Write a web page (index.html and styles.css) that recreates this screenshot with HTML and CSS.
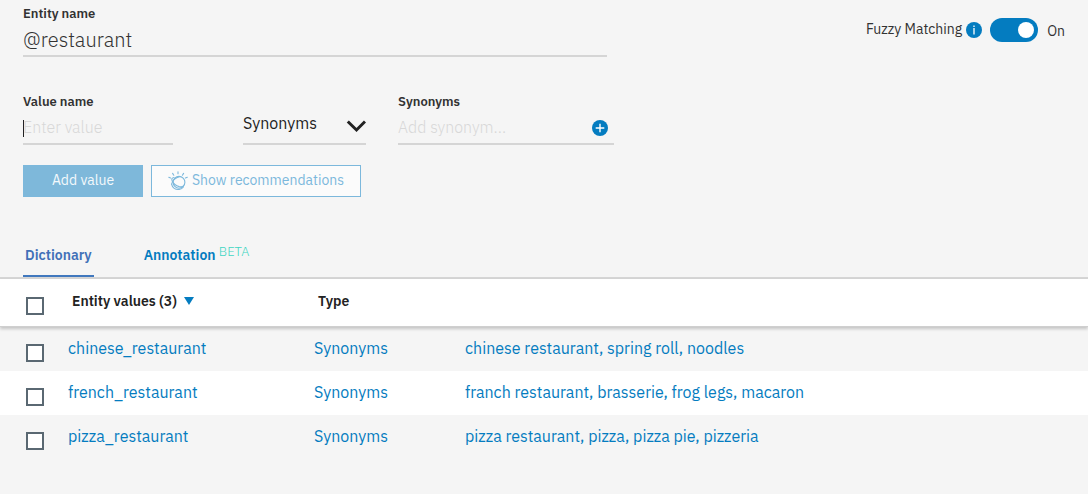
FILE: index.html
```html
<!DOCTYPE html>
<html lang="en">
<head>
<meta charset="utf-8">
<title>Entity @restaurant</title>
<link rel="stylesheet" href="styles.css">
</head>
<body>
<main class="page">
  <header class="entity-bar">
    <div class="field entity-field">
      <label class="label" for="entity">Entity name</label>
      <input class="entity-input" id="entity" type="text" value="@restaurant">
    </div>
    <div class="fuzzy">
      <label class="fuzzy-label" for="fuzzy">Fuzzy Matching</label>
      <button class="icon-button" type="button" aria-label="About fuzzy matching">
        <svg width="16" height="16" viewBox="0 0 16 16"><circle cx="8" cy="8" r="8" fill="#047cc0"/><path d="M8 6v6.500M8 3.500v1.500" stroke="#fff" stroke-width="1.300"/></svg>
      </button>
      <input class="toggle" id="fuzzy" type="checkbox" role="switch" checked>
      <span class="fuzzy-state">On</span>
    </div>
  </header>

  <form class="value-form">
    <div class="value-row">
      <div class="field value-field">
        <label class="label" for="value">Value name</label>
        <input class="text-input value-input" id="value" type="text" placeholder="Enter value">
      </div>
      <div class="field type-field">
        <select class="type-select" aria-label="Value type"><option>Synonyms</option><option>Patterns</option></select>
        <svg class="chevron" width="20" height="13" viewBox="0 0 20 13"><path d="M1.800 1.500 10.500 10l8.500-8.500" fill="none" stroke="#222" stroke-width="3"/></svg>
      </div>
      <div class="field synonym-field">
        <label class="label" for="synonym">Synonyms</label>
        <div class="synonym-box">
          <input class="synonym-input" id="synonym" type="text" placeholder="Add synonym...">
          <button class="icon-button" type="button" aria-label="Add synonym">
            <svg width="16" height="16" viewBox="0 0 16 16"><circle cx="8" cy="8" r="8" fill="#047cc0"/><path d="M8 3.700v8.600M3.700 8h8.600" stroke="#fff" stroke-width="1.400"/></svg>
          </button>
        </div>
      </div>
    </div>
    <div class="actions">
      <button class="button button-primary" type="button">Add value</button>
      <button class="button button-secondary" type="button">
        <svg width="20" height="20" viewBox="0 0 20 20" fill="none" stroke="#7cb8dc" stroke-width="1.100" stroke-linecap="round">
          <circle cx="11" cy="11.300" r="5.900"/>
          <path d="M6 6.500C4 6.600 3.300 8 4.200 10s3.600 4.700 7 5.600c2.200.5 3.700.2 4.400-.8"/>
          <path d="M3.600 13.200C4.200 9.900 7.500 6.800 12 5.500"/>
          <path d="M3.600 13.200c.6 3.500 3.700 5.800 7.600 5.300 1.900-.3 3.300-1.200 4.200-2.500"/>
          <path d="M.8 6.200 2.600 7M4.600 2.400l1.200 1.800M10 .8v2M15.600 2.400l-1.200 1.800M19.300 6.200l-1.900.8"/>
        </svg>
        <span>Show recommendations</span>
      </button>
    </div>
  </form>

  <nav class="tabs">
    <a class="tab tab-active" href="#dictionary">Dictionary</a>
    <a class="tab" href="#annotation">Annotation <span class="beta">BETA</span></a>
  </nav>

  <table class="values" id="dictionary">
    <thead>
      <tr>
        <th class="col-check"><input class="check" type="checkbox" aria-label="Select all"></th>
        <th class="col-name"><button class="sort" type="button">Entity values (3)<svg width="10" height="8" viewBox="0 0 10 8"><path d="M0 0h10L5 8z" fill="#047cc0"/></svg></button></th>
        <th class="col-type">Type</th>
        <th aria-label="Synonyms"></th>
      </tr>
    </thead>
    <tbody>
      <tr>
        <td><input class="check" type="checkbox" aria-label="chinese_restaurant"></td>
        <td><a class="link" href="#chinese">chinese_restaurant</a></td>
        <td><a class="link" href="#chinese">Synonyms</a></td>
        <td><a class="link" href="#chinese">chinese restaurant, spring roll, noodles</a></td>
      </tr>
      <tr>
        <td><input class="check" type="checkbox" aria-label="french_restaurant"></td>
        <td><a class="link" href="#french">french_restaurant</a></td>
        <td><a class="link" href="#french">Synonyms</a></td>
        <td><a class="link" href="#french">franch restaurant, brasserie, frog legs, macaron</a></td>
      </tr>
      <tr>
        <td><input class="check" type="checkbox" aria-label="pizza_restaurant"></td>
        <td><a class="link" href="#pizza">pizza_restaurant</a></td>
        <td><a class="link" href="#pizza">Synonyms</a></td>
        <td><a class="link" href="#pizza">pizza restaurant, pizza, pizza pie, pizzeria</a></td>
      </tr>
    </tbody>
  </table>
</main>
</body>
</html>
```

FILE: styles.css
```css
* {
  box-sizing: border-box;
}

body {
  margin: 0;
  background: #f5f5f5;
  color: #323232;
  font: 14px/20px "IBM Plex Sans", Roboto, sans-serif;
}

input,
select,
button {
  margin: 0;
  padding: 0;
  border: 0;
  border-radius: 0;
  background: none;
  color: inherit;
  font: inherit;
  outline: none;
}

svg {
  display: block;
  flex: none;
}

/* Entity header */
.entity-bar {
  display: flex;
  justify-content: space-between;
  gap: 24px;
  padding: 4px 23px 0;
}

.field {
  display: flex;
  flex-direction: column;
}

.label {
  font-size: 13px;
  font-weight: 600;
}

.entity-field {
  flex: 0 1 584px;
}

.entity-input {
  width: 100%;
  height: 33px;
  border-bottom: 2px solid #d5d5d5;
  font-size: 20px;
  font-weight: 300;
}

.fuzzy {
  display: flex;
  align-items: center;
  align-self: flex-start;
  padding-top: 14px;
}

.fuzzy-label {
  padding: 0 4px 2px 0;
}

.icon-button {
  flex: none;
}

.toggle {
  appearance: none;
  display: flex;
  width: 48px;
  height: 24px;
  margin: 0 9px 0 8px;
  padding: 4px;
  border-radius: 12px;
  background: #8c9ba5;
}

.toggle::before {
  content: "";
  width: 16px;
  height: 16px;
  border-radius: 50%;
  background: #fff;
}

.toggle:checked {
  justify-content: flex-end;
  background: #047cc0;
}

.fuzzy-state {
  padding-top: 2px;
}

/* Value form */
.value-form {
  padding: 35px 23px 0;
}

.value-row {
  display: flex;
  align-items: flex-end;
}

.value-field {
  flex: 0 1 150px;
  min-width: 0;
  margin-right: 70px;
}

.text-input,
.synonym-box {
  width: 100%;
  height: 33px;
  border-bottom: 2px solid #d5d5d5;
  font-size: 16px;
  font-weight: 300;
}

.value-input {
  padding-bottom: 2px;
  background: linear-gradient(#222, #222) 0 8px / 1px 17px no-repeat;
}

::placeholder {
  color: #d8d8d8;
  opacity: 1;
}

.type-field {
  position: relative;
  flex: 0 1 123px;
  margin-right: 32px;
}

.type-select {
  appearance: none;
  width: 100%;
  height: 41px;
  padding-bottom: 1px;
  border-bottom: 2px solid #d5d5d5;
  color: #222;
  font-size: 16px;
}

.chevron {
  position: absolute;
  top: 16px;
  right: 0;
  pointer-events: none;
}

.synonym-field {
  flex: 0 1 216px;
  min-width: 0;
}

.synonym-box {
  display: flex;
  align-items: center;
  padding-right: 6px;
}

.synonym-input {
  flex: 1;
  min-width: 0;
  padding-bottom: 2px;
}

.actions {
  display: flex;
  gap: 8px;
  padding-top: 20px;
}

.button {
  display: flex;
  align-items: center;
  justify-content: center;
  height: 32px;
  padding-bottom: 2px;
  border: 1px solid #7cb8dc;
}

.button-primary {
  width: 120px;
  background: #7eb8da;
  color: #f3f9fc;
}

.button-secondary {
  gap: 4px;
  width: 210px;
  background: #fbfbfb;
  color: #7cb8dc;
}

.button svg {
  margin-top: 2px;
}

/* Tabs */
.tabs {
  display: flex;
  gap: 48px;
  padding: 44px 23px 0;
}

.tab {
  padding: 4px 2px 10px;
  border-bottom: 2px solid transparent;
  color: #047cc0;
  font-weight: 600;
  text-decoration: none;
}

.tab-active {
  border-color: #4178be;
  color: #4170b8;
}

.beta {
  color: #41d6c3;
  font-size: 13px;
  font-weight: 300;
  line-height: 1;
  vertical-align: 4px;
}

/* Values table */
.values {
  width: 100%;
  border-collapse: separate;
  border-spacing: 0;
  table-layout: fixed;
  border-top: 2px solid #d5d5d5;
}

.col-check {
  width: 68px;
}

.col-name {
  width: 246px;
}

.col-type {
  width: 151px;
}

.values thead {
  position: relative;
  box-shadow: 0 2px 3px rgba(0, 0, 0, 0.2);
}

th {
  height: 48px;
  padding: 0 4px 4px;
  border-bottom: 1px solid #cfcfcf;
  background: #fff;
  color: #222;
  font-weight: 600;
  text-align: left;
}

td {
  height: 44px;
  padding: 0 0 2px;
}

tbody tr:nth-child(even) {
  background: #fff;
}

th:first-child,
td:first-child {
  padding: 7px 0 0 26px;
}

.sort {
  display: flex;
  align-items: center;
  gap: 7px;
}

.check {
  appearance: none;
  display: block;
  width: 18px;
  height: 18px;
  border: 2px solid #5a6872;
  background: #fff;
}

.check:checked {
  background: #047cc0;
}

.link {
  color: #047cc0;
  font-size: 16px;
  text-decoration: none;
}
```
